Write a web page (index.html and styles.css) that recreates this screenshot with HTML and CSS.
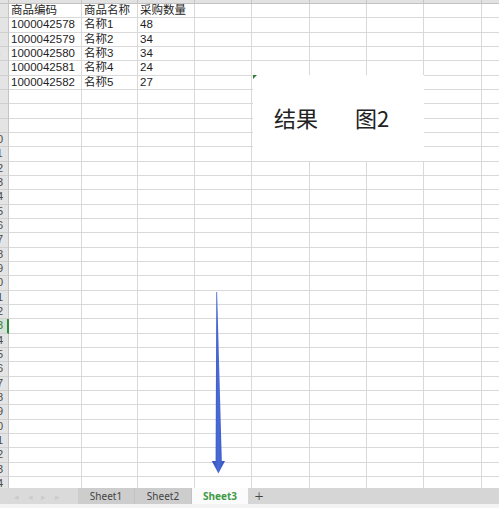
FILE: index.html
```html
<!DOCTYPE html>
<html lang="zh-CN">
<head>
<meta charset="utf-8">
<title>Sheet3</title>
<link rel="stylesheet" href="styles.css">
</head>
<body>
<div class="app">
  <div class="sheet">
    <div class="row colhead"><div class="rh"></div><div></div><div></div><div></div><div></div><div></div><div></div><div></div><div></div><div></div></div>
    <div class="row"><div class="rh"><span>1</span></div><div>商品编码</div><div>商品名称</div><div>采购数量</div><div></div><div></div><div></div><div></div><div></div><div></div></div>
    <div class="row"><div class="rh"><span>2</span></div><div>1000042578</div><div>名称1</div><div>48</div><div></div><div></div><div></div><div></div><div></div><div></div></div>
    <div class="row"><div class="rh"><span>3</span></div><div>1000042579</div><div>名称2</div><div>34</div><div></div><div></div><div></div><div></div><div></div><div></div></div>
    <div class="row"><div class="rh"><span>4</span></div><div>1000042580</div><div>名称3</div><div>34</div><div></div><div></div><div></div><div></div><div></div><div></div></div>
    <div class="row"><div class="rh"><span>5</span></div><div>1000042581</div><div>名称4</div><div>24</div><div></div><div></div><div></div><div></div><div></div><div></div></div>
    <div class="row"><div class="rh"><span>6</span></div><div>1000042582</div><div>名称5</div><div>27</div><div></div><div></div><div></div><div></div><div></div><div></div></div>
    <div class="row"><div class="rh"><span>7</span></div><div></div><div></div><div></div><div></div><div></div><div></div><div></div><div></div><div></div></div>
    <div class="row"><div class="rh"><span>8</span></div><div></div><div></div><div></div><div></div><div></div><div></div><div></div><div></div><div></div></div>
    <div class="row"><div class="rh"><span>9</span></div><div></div><div></div><div></div><div></div><div></div><div></div><div></div><div></div><div></div></div>
    <div class="row"><div class="rh"><span>10</span></div><div></div><div></div><div></div><div></div><div></div><div></div><div></div><div></div><div></div></div>
    <div class="row"><div class="rh"><span>11</span></div><div></div><div></div><div></div><div></div><div></div><div></div><div></div><div></div><div></div></div>
    <div class="row"><div class="rh"><span>12</span></div><div></div><div></div><div></div><div></div><div></div><div></div><div></div><div></div><div></div></div>
    <div class="row"><div class="rh"><span>13</span></div><div></div><div></div><div></div><div></div><div></div><div></div><div></div><div></div><div></div></div>
    <div class="row"><div class="rh"><span>14</span></div><div></div><div></div><div></div><div></div><div></div><div></div><div></div><div></div><div></div></div>
    <div class="row"><div class="rh"><span>15</span></div><div></div><div></div><div></div><div></div><div></div><div></div><div></div><div></div><div></div></div>
    <div class="row"><div class="rh"><span>16</span></div><div></div><div></div><div></div><div></div><div></div><div></div><div></div><div></div><div></div></div>
    <div class="row"><div class="rh"><span>17</span></div><div></div><div></div><div></div><div></div><div></div><div></div><div></div><div></div><div></div></div>
    <div class="row"><div class="rh"><span>18</span></div><div></div><div></div><div></div><div></div><div></div><div></div><div></div><div></div><div></div></div>
    <div class="row"><div class="rh"><span>19</span></div><div></div><div></div><div></div><div></div><div></div><div></div><div></div><div></div><div></div></div>
    <div class="row"><div class="rh"><span>20</span></div><div></div><div></div><div></div><div></div><div></div><div></div><div></div><div></div><div></div></div>
    <div class="row"><div class="rh"><span>21</span></div><div></div><div></div><div></div><div></div><div></div><div></div><div></div><div></div><div></div></div>
    <div class="row"><div class="rh"><span>22</span></div><div></div><div></div><div></div><div></div><div></div><div></div><div></div><div></div><div></div></div>
    <div class="row active"><div class="rh"><span>23</span></div><div></div><div></div><div></div><div></div><div></div><div></div><div></div><div></div><div></div></div>
    <div class="row"><div class="rh"><span>24</span></div><div></div><div></div><div></div><div></div><div></div><div></div><div></div><div></div><div></div></div>
    <div class="row"><div class="rh"><span>25</span></div><div></div><div></div><div></div><div></div><div></div><div></div><div></div><div></div><div></div></div>
    <div class="row"><div class="rh"><span>26</span></div><div></div><div></div><div></div><div></div><div></div><div></div><div></div><div></div><div></div></div>
    <div class="row"><div class="rh"><span>27</span></div><div></div><div></div><div></div><div></div><div></div><div></div><div></div><div></div><div></div></div>
    <div class="row"><div class="rh"><span>28</span></div><div></div><div></div><div></div><div></div><div></div><div></div><div></div><div></div><div></div></div>
    <div class="row"><div class="rh"><span>29</span></div><div></div><div></div><div></div><div></div><div></div><div></div><div></div><div></div><div></div></div>
    <div class="row"><div class="rh"><span>30</span></div><div></div><div></div><div></div><div></div><div></div><div></div><div></div><div></div><div></div></div>
    <div class="row"><div class="rh"><span>31</span></div><div></div><div></div><div></div><div></div><div></div><div></div><div></div><div></div><div></div></div>
    <div class="row"><div class="rh"><span>32</span></div><div></div><div></div><div></div><div></div><div></div><div></div><div></div><div></div><div></div></div>
    <div class="row"><div class="rh"><span>33</span></div><div></div><div></div><div></div><div></div><div></div><div></div><div></div><div></div><div></div></div>
    <div class="row"><div class="rh"><span>34</span></div><div></div><div></div><div></div><div></div><div></div><div></div><div></div><div></div><div></div></div>

    <div class="textbox">
      <i class="corner"></i>
      <span class="tb-a">结果</span><span class="tb-b">图2</span>
    </div>

    <svg class="arrow" width="20" height="190" viewBox="0 0 20 190" aria-hidden="true">
      <defs>
        <linearGradient id="ag" x1="0" y1="0" x2="1" y2="0">
          <stop offset="0" stop-color="#2f4fb8"/>
          <stop offset="0.5" stop-color="#4a6ad6"/>
          <stop offset="1" stop-color="#2f4fb8"/>
        </linearGradient>
      </defs>
      <polygon points="8.3,2 9.1,2 13.8,171 17,171 10.4,183.5 3.8,171 7.6,171" fill="url(#ag)"/>
    </svg>
  </div>

  <div class="tabbar">
    <div class="nav"><span>◂</span><span>◂</span><span>▸</span><span>▸</span></div>
    <div class="tab">Sheet1</div>
    <div class="tab">Sheet2</div>
    <div class="tab current">Sheet3</div>
    <div class="add">+</div>
  </div>
  <div class="statusgap"></div>
</div>
</body>
</html>
```

FILE: styles.css
```css
* { box-sizing: border-box; }

html, body {
  margin: 0;
  padding: 0;
  background: #ffffff;
}

.app {
  width: 499px;
  height: 508px;
  overflow: hidden;
  display: flex;
  flex-direction: column;
}

.sheet {
  position: relative;
  height: 488px;
  overflow: hidden;
  background: #ffffff;
}

.row {
  display: grid;
  grid-template-columns: 9px 73px 56px 57px 57px 58px 57px 57px 58px 40px;
  height: 14.333px;
  font-family: "Liberation Sans", "Noto Sans CJK SC", sans-serif;
  font-size: 11.5px;
  color: #1e1e1e;
}

.row > div {
  border-right: 1px solid #d9d9d9;
  border-bottom: 1px solid #d9d9d9;
  padding-left: 2px;
  line-height: 13px;
  white-space: nowrap;
  overflow: hidden;
}

.row > .rh {
  padding: 0;
  background: #e4e4e4;
  border-right: 1px solid #c4c4c4;
  border-bottom: 1px solid #cfcfcf;
  overflow: hidden;
}

.rh span {
  display: block;
  width: 24px;
  margin-left: -15px;
  text-align: center;
  font-family: "Liberation Sans", sans-serif;
  font-size: 11px;
  line-height: 13px;
  color: #4a4a4a;
}

.row.active .rh {
  border-right: 2px solid #2e8b3e;
  background: #d6e2d8;
}
.row.active .rh span { color: #2e7d3a; }

.row.colhead {
  height: 4px;
}
.row.colhead > div {
  background: #e2e2e2;
  border-right: 1px solid #c6c6c6;
  border-bottom: 1px solid #c2c2c2;
}

.textbox {
  position: absolute;
  left: 253px;
  top: 75px;
  width: 171px;
  height: 86px;
  background: #ffffff;
  display: flex;
  align-items: center;
  padding-left: 21px;
  padding-bottom: 2px;
  font-family: "Noto Sans CJK SC", sans-serif;
  font-size: 22px;
  color: #222222;
}

.tb-a { margin-right: 37px; }

.corner {
  position: absolute;
  left: 0;
  top: 0;
  width: 0;
  height: 0;
  border-top: 4px solid #2e7d3a;
  border-right: 4px solid transparent;
}

.arrow {
  position: absolute;
  left: 208px;
  top: 290px;
}

.tabbar {
  height: 16px;
  display: flex;
  background: #d6d6d6;
  font-family: "Noto Sans", sans-serif;
  font-size: 10px;
  color: #444444;
}

.nav {
  width: 78px;
  display: flex;
  align-items: center;
  justify-content: space-around;
  padding: 0 14px 0 10px;
  background: #dadada;
  color: #cbcbcb;
  font-size: 9px;
}

.tab {
  width: 57px;
  display: flex;
  align-items: center;
  justify-content: center;
  background: #cdcdcd;
  border-right: 1px solid #c2c2c2;
}

.tab.current {
  width: 56px;
  background: #fbfbfb;
  color: #3d9a45;
  font-weight: bold;
  border-right: none;
}

.add {
  width: 22px;
  display: flex;
  align-items: center;
  justify-content: center;
  font-size: 16px;
  font-weight: 300;
  color: #444444;
  line-height: 1;
}

.statusgap {
  flex: 1;
  background: #f3f3f3;
}
```
